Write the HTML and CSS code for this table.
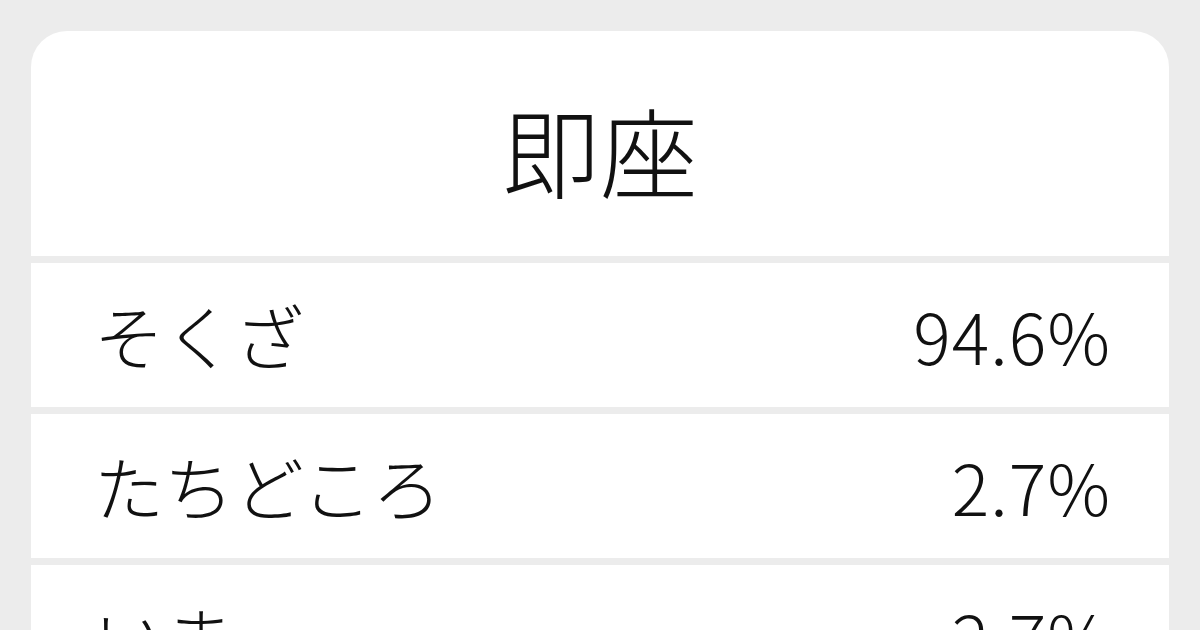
FILE: index.html
```html
<!DOCTYPE html>
<html lang="ja">
<head>
<meta charset="utf-8">
<link rel="stylesheet" href="styles.css">
</head>
<body>
<div class="card">
  <div class="title">即座</div>
  <div class="row"><span class="reading">そくざ</span><span class="pct">94.6%</span></div>
  <div class="row"><span class="reading">たちどころ</span><span class="pct">2.7%</span></div>
  <div class="row"><span class="reading">いま</span><span class="pct">2.7%</span></div>
</div>
</body>
</html>
```
FILE: styles.css
```css
html, body {
  margin: 0;
  padding: 0;
  background: #ececec;
  width: 1200px;
  height: 630px;
  overflow: hidden;
}
body {
  padding: 31px 31px 0;
  box-sizing: border-box;
  font-family: "Noto Sans CJK JP", "Noto Sans", sans-serif;
  color: #111;
}
.card {
  display: flex;
  flex-direction: column;
  gap: 7px;
  border-radius: 36px 36px 0 0;
  overflow: hidden;
  background: #ececec;
}
.title {
  background: #fff;
  height: 225px;
  display: flex;
  align-items: center;
  justify-content: center;
  font-size: 98px;
  font-weight: 300;
  padding-top: 8px;
  box-sizing: border-box;
}
.row {
  background: #fff;
  height: 144px;
  flex-shrink: 0;
  display: flex;
  align-items: center;
  justify-content: space-between;
  padding: 0 58px 0 63px;
  font-size: 70px;
  font-weight: 300;
  line-height: 1;
}
.pct {
  letter-spacing: 1px;
}
```
